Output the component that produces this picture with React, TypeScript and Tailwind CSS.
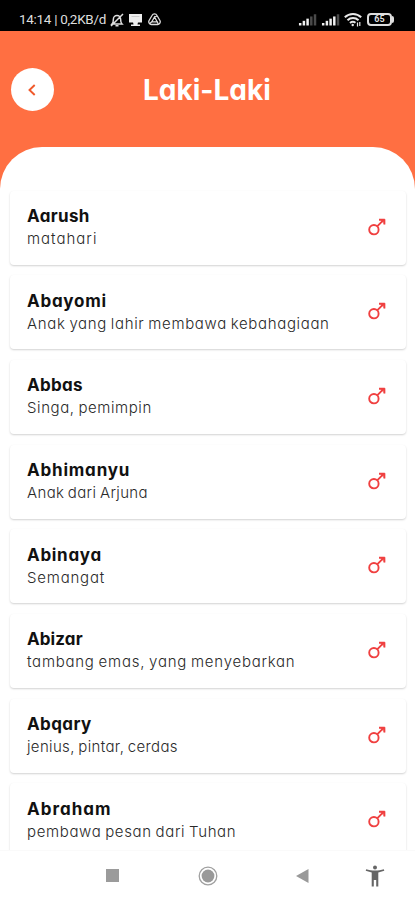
const NAMES: { name: string; meaning: string; nameClass: string; meaningClass: string }[] = [
  { name: "Aarush", meaning: "matahari", nameClass: "tracking-[0.35px]", meaningClass: "tracking-[1px]" },
  { name: "Abayomi", meaning: "Anak yang lahir membawa kebahagiaan", nameClass: "tracking-[0.75px]", meaningClass: "tracking-[0.66px]" },
  { name: "Abbas", meaning: "Singa, pemimpin", nameClass: "tracking-[0.3px]", meaningClass: "tracking-[0.58px]" },
  { name: "Abhimanyu", meaning: "Anak dari Arjuna", nameClass: "tracking-[0.8px]", meaningClass: "tracking-[0.35px]" },
  { name: "Abinaya", meaning: "Semangat", nameClass: "tracking-[0.7px]", meaningClass: "tracking-[0.8px]" },
  { name: "Abizar", meaning: "tambang emas, yang menyebarkan", nameClass: "tracking-[0.1px]", meaningClass: "tracking-[0.75px]" },
  { name: "Abqary", meaning: "jenius, pintar, cerdas", nameClass: "tracking-[0.4px]", meaningClass: "tracking-[0.35px]" },
  { name: "Abraham", meaning: "pembawa pesan dari Tuhan", nameClass: "tracking-[1px]", meaningClass: "tracking-[0.64px]" },
];

function MaleIcon() {
  return (
    <svg className="mb-[2px]" width="18" height="18" viewBox="0 0 18 18" fill="none" stroke="#f04040" strokeWidth="1.9">
      <circle cx="5.9" cy="11.7" r="4.7" />
      <path d="M9.2 8.4 15.9 1.7M11 1.8h5.8M16.4 1.3v5.3" />
      <path d="M11.5 1.5h5.2v5.2z" fill="#f04040" fillOpacity="0.5" stroke="none" />
    </svg>
  );
}

function Signal({ lit }: { lit: number }) {
  return (
    <svg width="19" height="13" viewBox="0 0 20 13">
      {[0, 1, 2, 3, 4].map((i) => (
        <rect
          key={i}
          x={1 + i * 3.9}
          y={10.2 - i * 2.3}
          width="2.6"
          height={2.6 + i * 2.3}
          fill={i < lit ? "#f0f0f0" : "#4a4a4a"}
        />
      ))}
    </svg>
  );
}

function StatusBar() {
  return (
    <div className="flex h-[31px] shrink-0 items-center justify-between bg-black pt-[8px] pr-[21px] pl-[19px] text-[#dedede]">
      <div className="flex items-center">
        <span className="w-[88px] text-[13.5px] leading-none tracking-[-0.3px] whitespace-nowrap font-['Roboto',sans-serif]">
          14:14 | 0,2KB/d
        </span>
        <svg className="ml-[3px]" width="14" height="14" viewBox="0 0 14 14" fill="none" stroke="currentColor" strokeWidth="1.5">
          <path d="M2 11h10c-1.3-1.3-1.4-2.2-1.4-5a3.6 3.6 0 0 0-7.2 0c0 2.8-.1 3.7-1.4 5ZM5.5 12.8h3M1 13 13 1" />
        </svg>
        <svg className="ml-[5px]" width="13" height="14" viewBox="0 0 13 14" fill="#eeeeee">
          <path d="M0 1h13v8.5H0z" />
          <path d="M4 9h5l-.5 2.5H11V13H2v-1.5h2.5z" />
          <path d="M2.5 3.5h8" stroke="#cccccc" />
        </svg>
        <svg className="ml-[6px]" width="13" height="13" viewBox="0 0 13 13" fill="none" stroke="currentColor" strokeWidth="1.3">
          <path d="M4 2.5a2.8 2.8 0 0 1 5 0l2.9 5a2.7 2.7 0 0 1-2.4 4h-6a2.7 2.7 0 0 1-2.4-4z" />
          <path d="M6.5 4 3.8 8.8h5.4zM6.5 4l2.7-1M3.8 8.8l-2 1.7M9.2 8.8l1 2.2" />
        </svg>
      </div>
      <div className="flex items-center">
        <Signal lit={3} />
        <span className="w-[4px]" />
        <Signal lit={4} />
        <svg className="ml-[4px]" width="18" height="14" viewBox="0 0 18 14" fill="none" stroke="#e8e8e8" strokeWidth="2">
          <path d="M.8 4.3a12 12 0 0 1 16.4 0M3.5 7.3a8 8 0 0 1 11 0M6 10a4.500 4.500 0 0 1 5.500-.3" />
          <circle cx="8.7" cy="12" r="1.2" fill="#e8e8e8" stroke="none" />
          <path d="M13.5 9.5v4M15.8 9v4" strokeWidth="1.2" />
        </svg>
        <div className="ml-[5px] flex h-[13px] w-[25px] items-center justify-center rounded-[4px] border-2 border-[#dedede] font-['Roboto',sans-serif] text-[9px] leading-none font-bold">
          65
        </div>
        <div className="h-[7px] w-[2px] rounded-r bg-[#dedede]" />
      </div>
    </div>
  );
}

function NavBar() {
  return (
    <div className="flex h-[50px] shrink-0 items-center border-t border-[#fafafa] bg-white pl-[106px]">
      <div className="h-[13px] w-[13px] bg-[#9b9b9b]" />
      <svg className="ml-[79px]" width="20" height="20" viewBox="0 0 20 20">
        <circle cx="10" cy="10" r="8.8" fill="white" stroke="#a0a0a0" strokeWidth="1.3" />
        <circle cx="10" cy="10" r="6.4" fill="#999999" />
      </svg>
      <svg className="ml-[78px]" width="13" height="14" viewBox="0 0 13 14">
        <path d="M12.5 0v14L0 7z" fill="#999999" />
      </svg>
      <svg className="ml-[56px]" width="20" height="22" viewBox="0 0 20 22" fill="#666666">
        <circle cx="10" cy="2.5" r="2" />
        <path d="M1.2 4.2C6 6 14 6 18.8 4.2l.5 1.6-6 1.7V21.5h-2.1V15H8.800v6.500H6.700V7.500l-6-1.700z" />
      </svg>
    </div>
  );
}

export default function App() {
  return (
    <div className="flex h-[900px] w-[415px] flex-col overflow-hidden bg-[#ff6f42] font-['Inter',sans-serif] [font-feature-settings:'cv11'_1]">
      <StatusBar />
      <header className="flex h-[116px] shrink-0 items-start pl-[11px]">
        <button className="mt-[37px] flex h-[43px] w-[43px] items-center justify-center rounded-full bg-white">
          <svg className="mr-[2px]" width="8" height="12" viewBox="0 0 8 12" fill="none" stroke="#f0592b" strokeWidth="1.9">
            <path d="M6.7 1 1.5 6l5.2 5" />
          </svg>
        </button>
        <h1 className="mt-[40px] ml-[89px] text-[28px] leading-[38px] font-bold whitespace-nowrap text-white">
          Laki-Laki
        </h1>
      </header>
      <div className="min-h-0 flex-1 overflow-hidden rounded-t-[42px] bg-white">
        <ul className="flex flex-col gap-[10.7px] px-[10px] pt-[43.5px]">
          {NAMES.map((item) => (
            <li
              key={item.name}
              className="flex h-[74px] w-[396px] shrink-0 items-center justify-between rounded-[4px] bg-white pr-[20px] pl-[17px] shadow-[0_1px_2px_rgba(0,0,0,0.18)]"
            >
              <div className="whitespace-nowrap">
                <p className="text-[17px] leading-[23px] font-bold text-[#111111]">
                  <span className={item.nameClass}>{item.name}</span>
                </p>
                <p className="text-[15px] leading-[22px] font-light [word-spacing:-1px] text-[#2a2a2a]">
                  <span className={item.meaningClass}>{item.meaning}</span>
                </p>
              </div>
              <MaleIcon />
            </li>
          ))}
        </ul>
      </div>
      <NavBar />
    </div>
  );
}
